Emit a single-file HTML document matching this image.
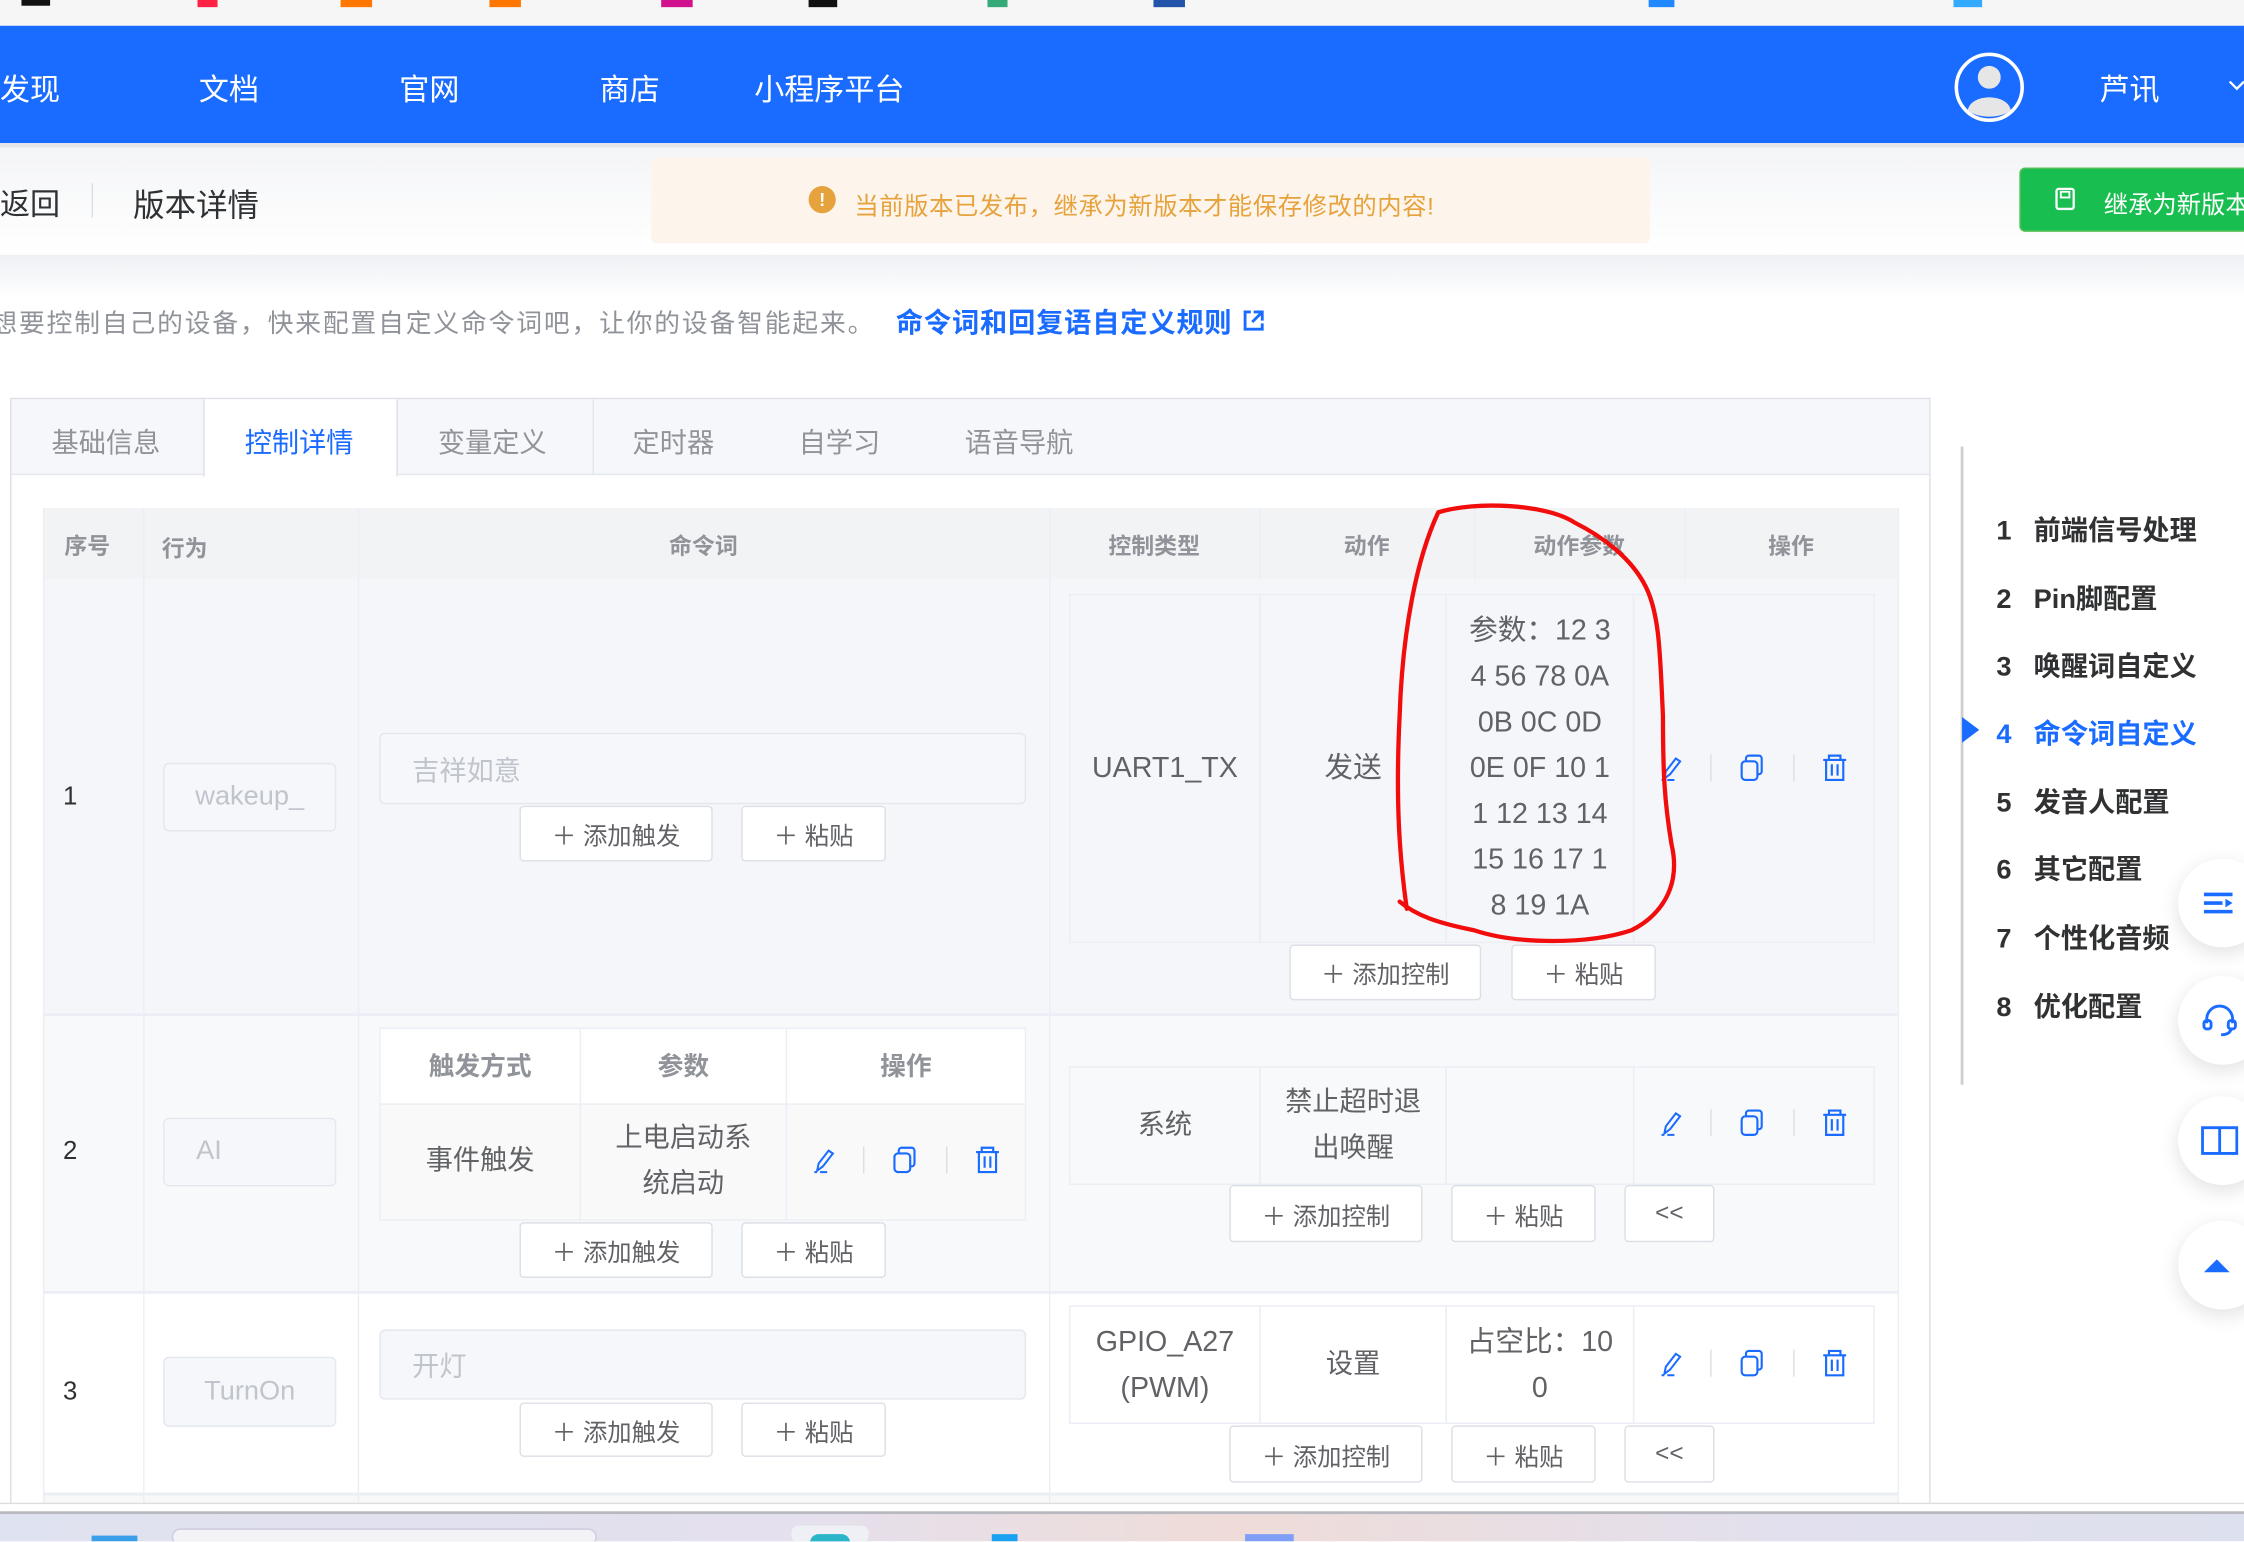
<!DOCTYPE html>
<html><head><meta charset="utf-8">
<style>
*{margin:0;padding:0;box-sizing:border-box}
html,body{width:2244px;height:1542px;overflow:hidden;background:#fff}
#w{position:absolute;left:0;top:0;width:1568px;height:1077px;transform:scale(1.43112);transform-origin:0 0;font-family:"Liberation Sans","Noto Sans CJK SC",sans-serif;color:#606266;overflow:hidden}
.a{position:absolute}
.t{position:absolute;white-space:nowrap}
.c{position:absolute;display:flex;align-items:center;justify-content:center;text-align:center}
.btn{position:absolute;background:#fff;border:1px solid #dcdfe6;border-radius:3px;display:flex;align-items:center;justify-content:center;font-size:17px;color:#606266}
.inp{position:absolute;background:#f5f7fa;border:1px solid #e4e7ed;border-radius:4px;color:#c0c4cc;font-size:19px;display:flex;align-items:center}
.cell{position:absolute;border:1px solid #ebeef5;display:flex;align-items:center;justify-content:center;text-align:center;font-size:19px;color:#606266;line-height:32px}
.th{position:absolute;display:flex;align-items:center;justify-content:center;font-size:16px;font-weight:bold;color:#909399}
.vl{position:absolute;width:1px;background:#ebeef5}
.sb{position:absolute;font-size:19px;font-weight:bold;color:#303133;white-space:nowrap}
.sb span{display:inline-block;width:26px}
.fb{position:absolute;left:1522px;width:62px;height:62px;border-radius:31px;background:#fff;box-shadow:0 4px 14px rgba(0,0,0,.12);display:flex;align-items:center;padding-left:16px}
</style></head><body><div id="w">
<!-- bookmarks bar -->
<div class="a" style="left:0;top:0;width:1568px;height:18px;background:#f6f6f6"></div>
<div class="a" style="left:15px;top:0;width:20px;height:4px;background:#111"></div>
<div class="a" style="left:138px;top:0;width:14px;height:5px;background:#f24"></div>
<div class="a" style="left:238px;top:0;width:22px;height:5px;background:#f70"></div>
<div class="a" style="left:342px;top:0;width:22px;height:5px;background:#f70"></div>
<div class="a" style="left:462px;top:0;width:22px;height:5px;background:#d1128f"></div>
<div class="a" style="left:565px;top:0;width:20px;height:5px;background:#111"></div>
<div class="a" style="left:690px;top:0;width:14px;height:5px;background:#3a7"></div>
<div class="a" style="left:806px;top:0;width:22px;height:5px;background:#25a"></div>
<div class="a" style="left:1152px;top:0;width:18px;height:5px;background:#28f"></div>
<div class="a" style="left:1365px;top:0;width:20px;height:5px;background:#3af"></div>
<!-- header -->
<div class="a" style="left:0;top:18px;width:1568px;height:82px;background:#1a6bff"></div>
<div class="t" style="left:0;top:47px;font-size:21px;color:#fff">发现</div>
<div class="t" style="left:139px;top:47px;font-size:21px;color:#fff">文档</div>
<div class="t" style="left:279px;top:47px;font-size:21px;color:#fff">官网</div>
<div class="t" style="left:419px;top:47px;font-size:21px;color:#fff">商店</div>
<div class="t" style="left:527px;top:47px;font-size:21px;color:#fff">小程序平台</div>
<svg class="a" style="left:1365px;top:35px" width="50" height="52" viewBox="0 0 50 52"><circle cx="25" cy="26" r="23" fill="#1a6bff" stroke="#fff" stroke-width="2.5"/><circle cx="25" cy="19" r="8" fill="#e6e6e6"/><path d="M10 42 C12 30 38 30 40 42 C33 48 17 48 10 42Z" fill="#e6e6e6"/></svg>
<div class="t" style="left:1467px;top:47px;font-size:21px;color:#fff">芦讯</div>
<svg class="a" style="left:1556px;top:55px" width="14" height="10"><path d="M2 2 L7 7 L12 2" stroke="#fff" stroke-width="1.6" fill="none"/></svg>
<div class="a" style="left:0;top:100px;width:1568px;height:3px;background:#e4e6ea"></div>
<!-- subheader -->
<div class="a" style="left:0;top:103px;width:1568px;height:75px;background:linear-gradient(#f4f5f7,#fff)"></div>
<div class="t" style="left:0;top:127px;font-size:21px;color:#303133">返回</div>
<div class="a" style="left:64px;top:128px;width:1px;height:24px;background:#dcdfe6"></div>
<div class="t" style="left:93px;top:126px;font-size:22px;color:#303133">版本详情</div>
<div class="a" style="left:455px;top:110px;width:698px;height:60px;background:#fdf5eb;border-radius:4px"></div>
<div class="c" style="left:565px;top:130px;width:19px;height:19px;border-radius:10px;background:#e6a23c;color:#fff;font-size:13px;font-weight:bold">!</div>
<div class="t" style="left:597px;top:130px;font-size:17px;color:#e6a23c;letter-spacing:0.4px">当前版本已发布，继承为新版本才能保存修改的内容!</div>
<div class="a" style="left:1411px;top:117px;width:170px;height:45px;background:#19be50;border-radius:4px;border:1px solid #5ac15a"></div>
<svg class="a" style="left:1435px;top:131px" width="16" height="16"><rect x="2" y="1" width="12" height="14" rx="1.5" fill="none" stroke="#fff" stroke-width="1.6"/><rect x="5" y="3" width="6" height="4" fill="none" stroke="#fff" stroke-width="1.3"/></svg>
<div class="t" style="left:1470px;top:129px;font-size:17px;color:#fff">继承为新版本</div>
<div class="a" style="left:0;top:178px;width:1568px;height:30px;background:linear-gradient(#eef0f4,#fff)"></div>
<div class="t" style="left:-6px;top:212px;font-size:18px;color:#909399;letter-spacing:1.3px">想要控制自己的设备，快来配置自定义命令词吧，让你的设备智能起来。</div>
<div class="t" style="left:626px;top:211px;font-size:19px;color:#1a6bff;font-weight:bold;letter-spacing:0.6px">命令词和回复语自定义规则</div>
<svg class="a" style="left:867px;top:215px" width="18" height="18"><path d="M7 3 H3 V15 H15 V11" stroke="#1a6bff" stroke-width="2" fill="none"/><path d="M9 3 H15 V9 M15 3 L8 10" stroke="#1a6bff" stroke-width="2" fill="none"/></svg>
<!-- card -->
<div class="a" style="left:7px;top:278px;width:1342px;height:780px;border:1px solid #dcdfe6;background:#fff"></div>
<div class="a" style="left:8px;top:279px;width:1340px;height:53px;background:#f5f7fa;border-bottom:1px solid #e4e7ed"></div>
<div class="a" style="left:142px;top:279px;width:136px;height:54px;background:#fff;border-left:1px solid #dcdfe6;border-right:1px solid #dcdfe6"></div>
<div class="t" style="left:36px;top:295px;font-size:19px;color:#909399">基础信息</div>
<div class="t" style="left:171px;top:295px;font-size:19px;color:#1a6bff">控制详情</div>
<div class="t" style="left:306px;top:295px;font-size:19px;color:#909399">变量定义</div>
<div class="a" style="left:414px;top:279px;width:1px;height:53px;background:#e4e7ed"></div>
<div class="t" style="left:442px;top:295px;font-size:19px;color:#909399">定时器</div>
<div class="t" style="left:558px;top:295px;font-size:19px;color:#909399">自学习</div>
<div class="t" style="left:674px;top:295px;font-size:19px;color:#909399">语音导航</div>
<!-- table header -->
<div class="a" style="left:30px;top:355px;width:1296px;height:50px;background:#f2f3f5"></div>
<div class="th" style="left:30px;top:355px;width:62px;height:50px">序号</div>
<div class="t" style="left:113px;top:370px;font-size:16px;font-weight:bold;color:#909399">行为</div>
<div class="th" style="left:250px;top:355px;width:483px;height:50px">命令词</div>
<div class="th" style="left:733px;top:355px;width:147px;height:50px">控制类型</div>
<div class="th" style="left:880px;top:355px;width:150px;height:50px">动作</div>
<div class="th" style="left:1030px;top:355px;width:147px;height:50px">动作参数</div>
<div class="th" style="left:1177px;top:355px;width:149px;height:50px">操作</div>
<!-- rows bg -->
<div class="a" style="left:30px;top:405px;width:1296px;height:303px;background:#f5f6f9"></div>
<div class="a" style="left:30px;top:708px;width:1296px;height:194px;background:#f8f9fb;border-top:2px solid #ebeef5"></div>
<div class="a" style="left:30px;top:902px;width:1296px;height:141px;background:#fff;border-top:2px solid #ebeef5"></div>
<div class="a" style="left:30px;top:1043px;width:1296px;height:15px;background:#f8f8f9;border-top:2px solid #ebeef5"></div>
<div class="vl" style="left:30px;top:355px;height:703px"></div>
<div class="vl" style="left:100px;top:355px;height:703px"></div>
<div class="vl" style="left:250px;top:355px;height:703px"></div>
<div class="vl" style="left:733px;top:355px;height:703px"></div>
<div class="vl" style="left:1326px;top:355px;height:703px"></div>
<div class="vl" style="left:880px;top:355px;height:50px"></div>
<div class="vl" style="left:1030px;top:355px;height:50px"></div>
<div class="vl" style="left:1177px;top:355px;height:50px"></div>
<!-- row1 -->
<div class="t" style="left:44px;top:546px;font-size:18px;color:#303133">1</div>
<div class="inp" style="left:114px;top:533px;width:121px;height:48px;justify-content:center">wakeup_</div>
<div class="inp" style="left:265px;top:512px;width:452px;height:50px;padding-left:22px">吉祥如意</div>
<div class="btn" style="left:363px;top:563px;width:135px;height:39px">＋ 添加触发</div>
<div class="btn" style="left:518px;top:563px;width:101px;height:39px">＋ 粘贴</div>
<div class="cell" style="left:747px;top:415px;width:134px;height:244px;font-size:20px">UART1_TX</div>
<div class="cell" style="left:880px;top:415px;width:131px;height:244px;font-size:20px">发送</div>
<div class="cell" style="left:1010px;top:415px;width:132px;height:244px;font-size:20px">参数：12 3<br>4 56 78 0A<br>0B 0C 0D<br>0E 0F 10 1<br>1 12 13 14<br>15 16 17 1<br>8 19 1A</div>
<div class="cell" style="left:1141px;top:415px;width:169px;height:244px"></div>
<div class="btn" style="left:901px;top:660px;width:134px;height:39px">＋ 添加控制</div>
<div class="btn" style="left:1056px;top:660px;width:101px;height:39px">＋ 粘贴</div>
<!-- row2 -->
<div class="t" style="left:44px;top:794px;font-size:18px;color:#303133">2</div>
<div class="inp" style="left:114px;top:781px;width:121px;height:48px;padding-left:22px">AI</div>
<div class="cell" style="left:265px;top:718px;width:141px;height:54px;background:#fff;font-weight:bold;color:#909399;font-size:18px">触发方式</div>
<div class="cell" style="left:405px;top:718px;width:145px;height:54px;background:#fff;font-weight:bold;color:#909399;font-size:18px">参数</div>
<div class="cell" style="left:549px;top:718px;width:168px;height:54px;background:#fff;font-weight:bold;color:#909399;font-size:18px">操作</div>
<div class="cell" style="left:265px;top:771px;width:141px;height:82px;background:#f9f9fa">事件触发</div>
<div class="cell" style="left:405px;top:771px;width:145px;height:82px;background:#f9f9fa">上电启动系<br>统启动</div>
<div class="cell" style="left:549px;top:771px;width:168px;height:82px;background:#f9f9fa"></div>
<div class="btn" style="left:363px;top:854px;width:135px;height:39px">＋ 添加触发</div>
<div class="btn" style="left:518px;top:854px;width:101px;height:39px">＋ 粘贴</div>
<div class="cell" style="left:747px;top:745px;width:134px;height:83px">系统</div>
<div class="cell" style="left:880px;top:745px;width:131px;height:83px">禁止超时退<br>出唤醒</div>
<div class="cell" style="left:1010px;top:745px;width:132px;height:83px"></div>
<div class="cell" style="left:1141px;top:745px;width:169px;height:83px"></div>
<div class="btn" style="left:859px;top:828px;width:135px;height:40px">＋ 添加控制</div>
<div class="btn" style="left:1014px;top:828px;width:101px;height:40px">＋ 粘贴</div>
<div class="btn" style="left:1135px;top:828px;width:63px;height:40px">&lt;&lt;</div>
<!-- row3 -->
<div class="t" style="left:44px;top:962px;font-size:18px;color:#303133">3</div>
<div class="inp" style="left:114px;top:948px;width:121px;height:49px;justify-content:center">TurnOn</div>
<div class="inp" style="left:265px;top:929px;width:452px;height:49px;padding-left:22px">开灯</div>
<div class="btn" style="left:363px;top:980px;width:135px;height:38px">＋ 添加触发</div>
<div class="btn" style="left:518px;top:980px;width:101px;height:38px">＋ 粘贴</div>
<div class="cell" style="left:747px;top:912px;width:134px;height:83px;font-size:20px">GPIO_A27<br>(PWM)</div>
<div class="cell" style="left:880px;top:912px;width:131px;height:83px">设置</div>
<div class="cell" style="left:1010px;top:912px;width:132px;height:83px;font-size:20px">占空比：10<br>0</div>
<div class="cell" style="left:1141px;top:912px;width:169px;height:83px"></div>
<div class="btn" style="left:859px;top:996px;width:135px;height:40px">＋ 添加控制</div>
<div class="btn" style="left:1014px;top:996px;width:101px;height:40px">＋ 粘贴</div>
<div class="btn" style="left:1135px;top:996px;width:63px;height:40px">&lt;&lt;</div>
<!-- icon sets -->
<svg width="0" height="0" style="position:absolute"><defs>
<g id="ops">
<path d="M3 17 L4 12 L11 3 L14 5 L7 14 Z M3 18 H1 M5 18 H10" stroke="#1a6bff" stroke-width="1.4" fill="none"/>
<rect x="35" y="0" width="1" height="19" fill="#dcdfe6"/>
<rect x="57" y="5" width="11" height="13" rx="2.5" fill="none" stroke="#1a6bff" stroke-width="1.5"/><path d="M60 5 V3 A2 2 0 0 1 62 1 H69 A2 2 0 0 1 71 3 V12 A2 2 0 0 1 69 14 H68" stroke="#1a6bff" stroke-width="1.5" fill="none"/>
<rect x="93" y="0" width="1" height="19" fill="#dcdfe6"/>
<path d="M114 4 H130 M118 4 V1 H126 V4 M116 4 V18 H128 V4 M120 7 V15 M124 7 V15" stroke="#1a6bff" stroke-width="1.5" fill="none"/>
</g></defs></svg>
<svg class="a" style="left:1160px;top:527px" width="140" height="20"><use href="#ops"/></svg>
<svg class="a" style="left:1160px;top:775px" width="140" height="20"><use href="#ops"/></svg>
<svg class="a" style="left:1160px;top:943px" width="140" height="20"><use href="#ops"/></svg>
<svg class="a" style="left:568px;top:801px" width="140" height="20"><use href="#ops"/></svg>
<!-- red circle -->
<svg class="a" style="left:0;top:0" width="1568" height="1077"><path d="M1005 358 C1030 350 1080 352 1100 365 C1120 375 1140 390 1150 410 C1160 430 1160 460 1162 500 C1162 540 1163 560 1168 590 C1175 620 1160 640 1140 650 C1110 660 1060 660 1030 650 C1005 645 990 640 978 630 M983 635 C978 600 975 560 978 500 C980 440 990 390 1005 358" stroke="#f20d0d" stroke-width="3" fill="none" stroke-linecap="round"/></svg>
<!-- sidebar -->
<div class="a" style="left:1370px;top:312px;width:2px;height:446px;background:#d0d0d0"></div>
<div class="sb" style="left:1395px;top:356px"><span>1</span>前端信号处理</div>
<div class="sb" style="left:1395px;top:404px"><span>2</span>Pin脚配置</div>
<div class="sb" style="left:1395px;top:451px"><span>3</span>唤醒词自定义</div>
<div class="a" style="left:1371px;top:501px;width:0;height:0;border-top:9px solid transparent;border-bottom:9px solid transparent;border-left:12px solid #1a6bff"></div>
<div class="sb" style="left:1395px;top:498px;color:#1a6bff"><span>4</span>命令词自定义</div>
<div class="sb" style="left:1395px;top:546px"><span>5</span>发音人配置</div>
<div class="sb" style="left:1395px;top:593px"><span>6</span>其它配置</div>
<div class="sb" style="left:1395px;top:641px"><span>7</span>个性化音频</div>
<div class="sb" style="left:1395px;top:689px"><span>8</span>优化配置</div>
<div class="fb" style="top:600px"><svg width="24" height="20"><path d="M2 4 H22 M2 10 H15 M2 16 H22" stroke="#1a6bff" stroke-width="2.5"/><path d="M17 7 L22 10 L17 13Z" fill="#1a6bff"/></svg></div>
<div class="fb" style="top:682px"><svg width="26" height="24"><path d="M4 14 V11 A9 9 0 0 1 22 11 V14" stroke="#1a6bff" stroke-width="2" fill="none"/><rect x="2" y="12" width="5" height="6" rx="2" fill="none" stroke="#1a6bff" stroke-width="2"/><rect x="19" y="12" width="5" height="6" rx="2" fill="none" stroke="#1a6bff" stroke-width="2"/><path d="M21 18 Q20 22 14 22" stroke="#1a6bff" stroke-width="2" fill="none"/></svg></div>
<div class="fb" style="top:766px"><svg width="26" height="22"><path d="M1 2 H13 V20 H1Z M13 2 H25 V20 H13" stroke="#1a6bff" stroke-width="2" fill="none"/></svg></div>
<div class="fb" style="top:853px"><svg width="22" height="14"><path d="M2 12 L11 3 L20 12Z" fill="#1a6bff"/></svg></div>
<!-- taskbar -->
<div class="a" style="left:0;top:1050px;width:1568px;height:6px;background:#fff;border-top:1px solid #ddd"></div>
<div class="a" style="left:0;top:1056px;width:1568px;height:21px;background:linear-gradient(90deg,#dfe2f0,#e4e0ee 35%,#efdcd8 55%,#e2e0ee 80%,#dde0ee);border-top:2px solid #b8b8c0"></div>
<div class="a" style="left:120px;top:1068px;width:297px;height:12px;border-radius:10px;background:#f3f3f7;border:1px solid #ccd"></div>
<div class="a" style="left:553px;top:1066px;width:54px;height:12px;border-radius:5px;background:#eef0f6"></div>
<div class="a" style="left:566px;top:1072px;width:28px;height:6px;border-radius:6px 6px 0 0;background:#2bb5c8"></div>
<div class="a" style="left:64px;top:1073px;width:32px;height:4px;background:#3a9fe8"></div>
<div class="a" style="left:870px;top:1072px;width:34px;height:5px;background:#7e9ef8"></div>
<div class="a" style="left:693px;top:1072px;width:18px;height:5px;background:#1aa0f0"></div>
</div></body></html>
